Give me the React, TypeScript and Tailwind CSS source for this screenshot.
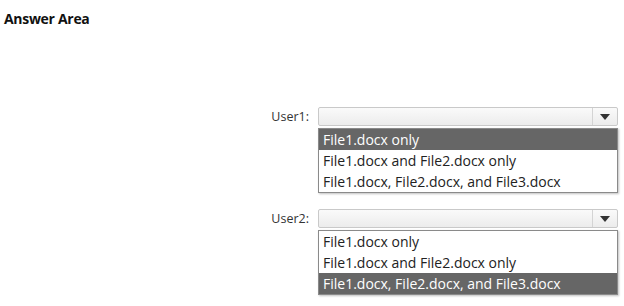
const options = [
  "File1.docx only",
  "File1.docx and File2.docx only",
  "File1.docx, File2.docx, and File3.docx",
];

function Dropdown({ label, selected }: { label: string; selected: number }) {
  return (
    <div className="flex items-start">
      <div className="w-[318px] pr-[9px] text-right text-[12.5px] leading-[19px] text-[#333]">{label}</div>
      <div className="w-[300px]">
        <div className="flex h-[19px] border border-[#c9c9c9] rounded-[2px] bg-gradient-to-b from-[#fafafa] to-[#ececec]">
          <div className="flex-1" />
          <div className="w-[25px] border-l border-[#d4d4d4] flex items-center justify-center">
            <svg width="10" height="6" viewBox="0 0 10 6">
              <path d="M0 0 L10 0 L5 6 Z" fill="#333" />
            </svg>
          </div>
        </div>
        <div className="mt-[2px] border border-[#8a8a8a] bg-white shadow-[1px_1px_2px_rgba(0,0,0,0.25)]">
          {options.map((o, i) => (
            <div
              key={o}
              className={
                "h-[21px] pl-[4px] text-[14px] leading-[21px] " +
                (i === selected ? "bg-[#666666] text-white" : "text-[#222]")
              }
            >
              {o}
            </div>
          ))}
        </div>
      </div>
    </div>
  );
}

export default function App() {
  return (
    <div className="w-[624px] h-[306px] bg-white overflow-hidden" style={{ fontFamily: '"Open Sans", "Noto Sans", sans-serif' }}>
      <div className="pl-[4px] pt-[9px] text-[14px] leading-[20px] font-bold tracking-[-0.3px] text-[#111]">Answer Area</div>
      <div className="mt-[78px] flex flex-col gap-[16px]">
        <Dropdown label="User1:" selected={0} />
        <Dropdown label="User2:" selected={2} />
      </div>
    </div>
  );
}
